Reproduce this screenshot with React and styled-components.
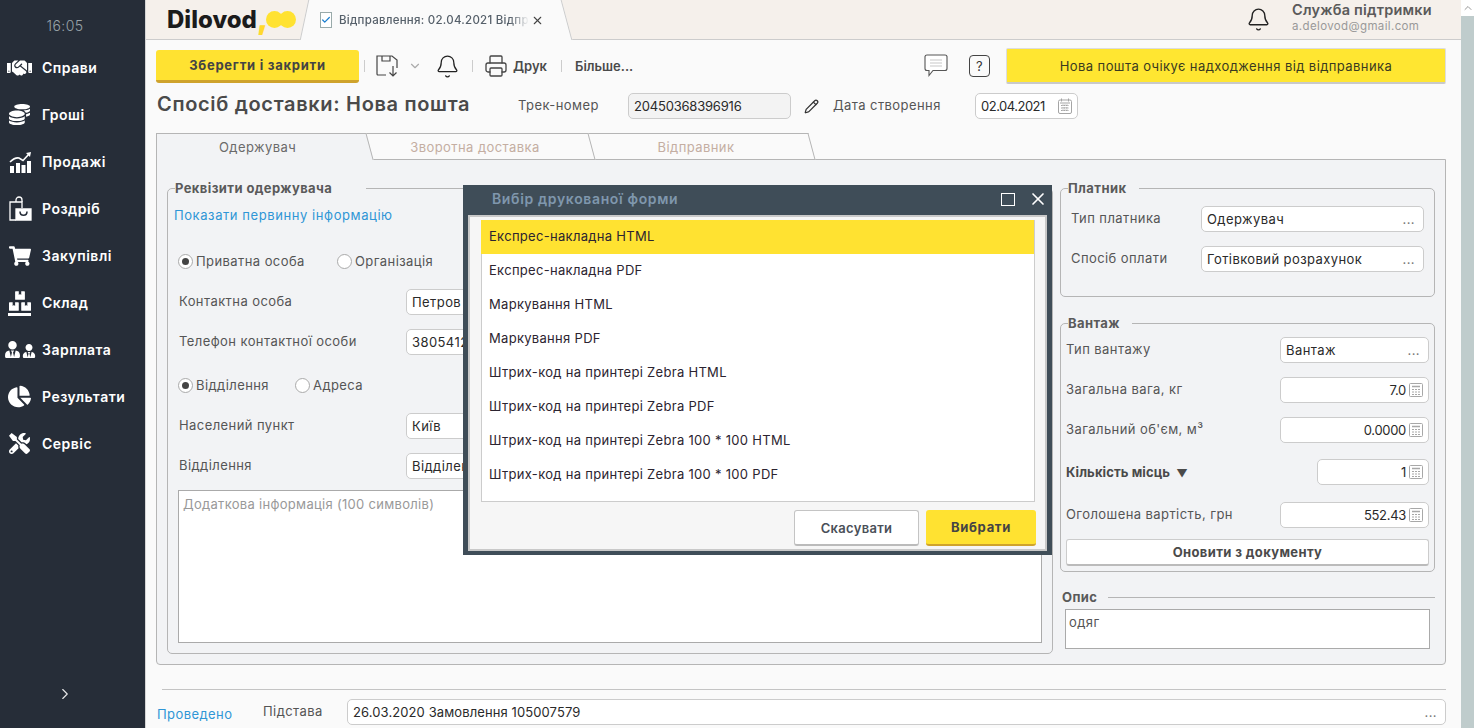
import React from 'react'
import styled, { createGlobalStyle } from 'styled-components'
import { Bell, Printer, Pencil, ChevronDown, ChevronRight, ChevronUp, X, Check } from 'lucide-react'
import { FaHandshake, FaCoins, FaShoppingCart, FaBoxes, FaUserTie, FaChartPie, FaTools } from 'react-icons/fa'

const GlobalStyle = createGlobalStyle`
  html, body {
    margin: 0;
    padding: 0;
    height: 100%;
    overflow: hidden;
  }
  body {
    font-family: Inter, "Noto Sans", "Liberation Sans", sans-serif;
    font-size: 13px;
    letter-spacing: 0.42px;
    color: #555;
  }
  * {
    box-sizing: border-box;
  }
`

const ChartIcon = () => (
  <svg width="24" height="24" viewBox="0 0 24 24" fill="#fff">
    <rect x="2" y="16" width="4" height="7" />
    <rect x="8" y="13" width="4" height="10" />
    <rect x="13.500" y="15" width="4" height="8" />
    <rect x="19" y="11" width="4" height="12" />
    <path d="M2 12c3-3 6-4.500 9-4l4 2.500 6-6.500" fill="none" stroke="#fff" strokeWidth="1.600" />
    <path d="M18 3l5-1-1 5z" />
  </svg>
)

const BagIcon = () => (
  <svg width="24" height="26" viewBox="0 0 24 26" fill="none" stroke="#fff" strokeWidth="1.300">
    <path d="M8 6V4a3 3 0 0 1 6 0v2" />
    <path d="M14 12V6H2v18h6" />
    <path d="M8 13h15v11H8z" fill="#fff" />
    <path d="M12 15.500c0 5 7 5 7 0" stroke="#262d38" strokeWidth="1.500" />
  </svg>
)

const StockIcon = () => (
  <StockWrap>
    <FaBoxes size={22} />
    <StockBar />
  </StockWrap>
)

const PeopleIcon = () => (
  <PeopleWrap>
    <FaUserTie size={17} />
    <FaUserTie size={14} />
  </PeopleWrap>
)

const SaveIcon = () => (
  <svg width="23" height="24" viewBox="0 0 23 24" fill="none" stroke="#444" strokeWidth="1.200">
    <path d="M10 21H2a1 1 0 0 1-1-1V2h15l5 4v8" />
    <path d="M6 2v5h8V2" />
    <path d="M17 12v10M13.500 18.500l3.500 3.500 3.500-3.500" />
  </svg>
)

const ChatIcon = () => (
  <svg width="24" height="26" viewBox="0 0 24 26" fill="#fff" stroke="#555" strokeWidth="1.100">
    <path d="M3 2h18a2 2 0 0 1 2 1.500v12a2 2 0 0 1-2 2H9l-4 5v-5H3a2 2 0 0 1-2-2v-12A2 2 0 0 1 3 2z" />
    <path d="M6 7h12M6 10h12M6 13h12" stroke="#c8c8c8" />
  </svg>
)

const CalendarIcon = () => (
  <svg width="14" height="16" viewBox="0 0 14 16" fill="none" stroke="#a5a5a5">
    <rect x="0.500" y="2" width="13" height="13.500" rx="1.500" />
    <path d="M3.500 0.500v3M10.500 0.500v3M2 5h10" />
    <path d="M3 7.500h8M3 10h8M3 12.500h8M5 6.500v7M7 6.500v7M9 6.500v7" strokeDasharray="1.500 1" />
  </svg>
)

const CalcIcon = () => (
  <svg width="14" height="14" viewBox="0 0 14 14" fill="none" stroke="#a8a8a8">
    <rect x="0.500" y="0.500" width="13" height="13" rx="1" />
    <path d="M3 3.500h8" strokeWidth="1.500" />
    <path d="M3 6.500h8M3 9h8M3 11.500h8" strokeDasharray="2 1" />
  </svg>
)

const NAV = [
  ['Справи', <FaHandshake size={26} />],
  ['Гроші', <FaCoins size={21} />],
  ['Продажі', <ChartIcon />],
  ['Роздріб', <BagIcon />],
  ['Закупівлі', <FaShoppingCart size={22} />],
  ['Склад', <StockIcon />],
  ['Зарплата', <PeopleIcon />],
  ['Результати', <FaChartPie size={23} />],
  ['Сервіс', <FaTools size={21} />],
]

const PRINT_FORMS = [
  'Експрес-накладна HTML',
  'Експрес-накладна PDF',
  'Маркування HTML',
  'Маркування PDF',
  'Штрих-код на принтері Zebra HTML',
  'Штрих-код на принтері Zebra PDF',
  'Штрих-код на принтері Zebra 100 * 100 HTML',
  'Штрих-код на принтері Zebra 100 * 100 PDF',
]

function SelectField({ value, width }) {
  return (
    <Field $width={width}>
      <FieldText>{value}</FieldText>
      <Dots>...</Dots>
    </Field>
  )
}

function NumberField({ value, width = 149 }) {
  return (
    <Field $width={width}>
      <FieldText $right $ls={-0.3}>{value}</FieldText>
      <CalcIcon />
    </Field>
  )
}

export default function App() {
  return (
    <Page>
      <GlobalStyle />
      <Sidebar>
        <Clock>16:05</Clock>
        <Nav>
          {NAV.map(([name, icon]) => (
            <NavItem key={name}>
              <NavIcon>{icon}</NavIcon>
              {name}
            </NavItem>
          ))}
        </Nav>
        <Collapse>
          <ChevronRight size={18} strokeWidth={1.500} />
        </Collapse>
      </Sidebar>

      <Main>
        <Header>
          <Logo>
            Dilovod<Comma>,</Comma>
            <Dot />
            <Dot />
          </Logo>
          <DocTab>
            <DocIcon>
              <Check size={10} strokeWidth={3} />
            </DocIcon>
            <DocTitle>Відправлення: 02.04.2021 Відправлення</DocTitle>
            <X size={13} color="#444" style={{ marginLeft: 2 }} />
          </DocTab>
          <Support>
            <Bell size={25} strokeWidth={1.300} color="#222" />
            <SupportText>
              <SupportName>Служба підтримки</SupportName>
              <SupportMail>a.delovod@gmail.com</SupportMail>
            </SupportText>
          </Support>
        </Header>

        <Content>
          <Toolbar>
            <SaveButton>Зберегти і закрити</SaveButton>
            <Sep $left={5} $right={11} />
            <SaveIcon />
            <ChevronDown size={14} color="#aaa" style={{ marginLeft: 9 }} />
            <Bell size={25} strokeWidth={1.200} color="#222" style={{ marginLeft: 13 }} />
            <Sep $left={12} $right={12} />
            <Printer size={24} strokeWidth={1.300} color="#444" style={{ marginLeft: -1 }} />
            <ToolText $left={5}>Друк</ToolText>
            <Sep $left={14} $right={13} />
            <ToolText>Більше...</ToolText>
            <ToolRight>
              <ChatIcon />
              <HelpBox>?</HelpBox>
              <StatusBox>Нова пошта очікує надходження від відправника</StatusBox>
            </ToolRight>
          </Toolbar>

          <TitleRow>
            <Title>Спосіб доставки: Нова пошта</Title>
            <TrackLabel>Трек-номер</TrackLabel>
            <Field $width={163} $muted>
              <FieldText $ls={-0.2}>20450368396916</FieldText>
            </Field>
            <Pencil size={15} color="#333" style={{ margin: '0 14px 0 13px' }} />
            <DateLabel>Дата створення</DateLabel>
            <Field $width={103}>
              <FieldText $ls={-0.5}>02.04.2021</FieldText>
              <CalendarIcon />
            </Field>
          </TitleRow>

          <Tabs>
            <Tab $active $width={213} $z={3}>Одержувач</Tab>
            <Tab $width={222} $z={2}>Зворотна доставка</Tab>
            <Tab $width={220} $z={1}>Відправник</Tab>
          </Tabs>

          <Panel>
            <RecipientBox>
              <Legend $gap={34}>Реквізити одержувача</Legend>
              <LinkText>Показати первинну інформацію</LinkText>
              <RadioRow $top={20}>
                <RadioLabel $width={159}>
                  <Radio $on />
                  Приватна особа
                </RadioLabel>
                <RadioLabel>
                  <Radio />
                  Організація
                </RadioLabel>
              </RadioRow>
              <FormRow $top={15}>
                <LeftLabel>Контактна особа</LeftLabel>
                <Field $width={400}><FieldText>Петров Петро</FieldText></Field>
              </FormRow>
              <FormRow $top={14}>
                <LeftLabel>Телефон контактної особи</LeftLabel>
                <Field $width={400}><FieldText>380541234567</FieldText></Field>
              </FormRow>
              <RadioRow $top={17}>
                <RadioLabel $width={117}>
                  <Radio $on />
                  Відділення
                </RadioLabel>
                <RadioLabel>
                  <Radio />
                  Адреса
                </RadioLabel>
              </RadioRow>
              <FormRow $top={15}>
                <LeftLabel>Населений пункт</LeftLabel>
                <Field $width={400}><FieldText>Київ</FieldText></Field>
              </FormRow>
              <FormRow $top={14}>
                <LeftLabel>Відділення</LeftLabel>
                <Field $width={400}><FieldText>Відділення №1</FieldText></Field>
              </FormRow>
              <NoteArea>Додаткова інформація (100 символів)</NoteArea>
            </RecipientBox>

            <SideColumn>
              <PayerBox>
                <Legend $gap={13}>Платник</Legend>
                <PayerRow $top={9}>
                  <span>Тип платника</span>
                  <SelectField value="Одержувач" width={223} />
                </PayerRow>
                <PayerRow $top={14}>
                  <span>Спосіб оплати</span>
                  <SelectField value="Готівковий розрахунок" width={223} />
                </PayerRow>
              </PayerBox>

              <CargoBox>
                <Legend $gap={12}>Вантаж</Legend>
                <CargoRow $top={5}>
                  <span>Тип вантажу</span>
                  <SelectField value="Вантаж" width={149} />
                </CargoRow>
                <CargoRow $top={14}>
                  <span>Загальна вага, кг</span>
                  <NumberField value="7.0" />
                </CargoRow>
                <CargoRow $top={14}>
                  <span>Загальний об'єм, м³</span>
                  <NumberField value="0.0000" />
                </CargoRow>
                <CargoRow $top={16}>
                  <strong>Кількість місць<Arrow>▼</Arrow></strong>
                  <NumberField value="1" width={112} />
                </CargoRow>
                <CargoRow $top={17}>
                  <span>Оголошена вартість, грн</span>
                  <NumberField value="552.43" />
                </CargoRow>
                <RefreshButton>Оновити з документу</RefreshButton>
              </CargoBox>

              <DescHead>Опис</DescHead>
              <DescArea>одяг</DescArea>
            </SideColumn>
          </Panel>

          <Footer>
            <FooterStatus>Проведено</FooterStatus>
            <FooterLabel>Підстава</FooterLabel>
            <Field $grow>
              <FieldText $ls={0.1}>26.03.2020 Замовлення 105007579</FieldText>
              <Dots>...</Dots>
            </Field>
          </Footer>
        </Content>
      </Main>

      <ScrollRail>
        <ScrollUp>
          <ChevronUp size={12} color="#999" />
        </ScrollUp>
      </ScrollRail>

      <Modal>
        <ModalHead>
          <ModalTitle>Вибір друкованої форми</ModalTitle>
          <MaxBox />
          <X size={20} color="#fff" strokeWidth={2} style={{ marginRight: -1 }} />
        </ModalHead>
        <ModalBody>
          <FormList>
            {PRINT_FORMS.map((name, i) => (
              <FormItem key={name} $selected={i === 0}>{name}</FormItem>
            ))}
          </FormList>
          <ModalActions>
            <CancelButton>Скасувати</CancelButton>
            <ChooseButton>Вибрати</ChooseButton>
          </ModalActions>
        </ModalBody>
      </Modal>
    </Page>
  )
}

const Page = styled.div`
  display: flex;
  width: 1474px;
  height: 728px;
  position: relative;
  overflow: hidden;
  background: #fafafa;
`

const Sidebar = styled.aside`
  width: 146px;
  flex: none;
  display: flex;
  flex-direction: column;
  background: #262d38;
  border-right: 1px solid #d5d5d5;
`

const Clock = styled.div`
  height: 44px;
  padding-top: 16px;
  text-align: center;
  padding-right: 15px;
  font-size: 14px;
  font-weight: 300;
  line-height: 20px;
  color: #98a2a8;
`

const Nav = styled.nav`
  display: flex;
  flex-direction: column;
`

const NavItem = styled.div`
  height: 47px;
  display: flex;
  align-items: center;
  color: #fff;
  font-size: 14px;
  font-weight: 600;
  letter-spacing: 0.5px;
`

const NavIcon = styled.span`
  width: 42px;
  padding-left: 7px;
  padding-right: 10px;
  display: flex;
  justify-content: center;
  align-items: center;
  flex: none;
`

const StockWrap = styled.span`
  display: flex;
  flex-direction: column;
  align-items: center;
`

const StockBar = styled.span`
  width: 23px;
  height: 3px;
  margin-top: 1px;
  background: #fff;
`

const PeopleWrap = styled.span`
  display: flex;
  align-items: flex-end;
  gap: 1px;
`

const Collapse = styled.div`
  margin-top: auto;
  margin-bottom: 25px;
  padding-right: 15px;
  display: flex;
  justify-content: center;
  color: #e8e8e8;
`

const Main = styled.main`
  flex: 1;
  min-width: 0;
  display: flex;
  flex-direction: column;
`

const Header = styled.header`
  height: 40px;
  display: flex;
  align-items: center;
  background: #f5f0eb;
  border-bottom: 1px solid #ccc;
`

const Logo = styled.div`
  width: 163px;
  padding-left: 21px;
  display: flex;
  align-items: center;
  font-size: 24px;
  font-weight: 800;
  letter-spacing: 0;
  color: #1b1b1b;
`

const Comma = styled.span`
  margin-right: -2px;
  margin-top: -3px;
  font-size: 30px;
  font-weight: 900;
  line-height: 30px;
  color: #ffd92e;
`

const Dot = styled.span`
  width: 17px;
  height: 17px;
  margin-right: -4px;
  border-radius: 50%;
  background: #ffe231;
`

const DocTab = styled.div`
  position: relative;
  align-self: stretch;
  width: 249px;
  margin-bottom: -1px;
  margin-left: 2px;
  padding-left: 9px;
  display: flex;
  align-items: center;
  background: #fafafa;
  z-index: 1;

  &::before,
  &::after {
    content: '';
    position: absolute;
    top: 0;
    bottom: 0;
    width: 14px;
    background: #fafafa;
    z-index: -1;
  }
  &::before {
    left: -7px;
    border-left: 1px solid #ccc;
    transform: skewX(-12deg);
  }
  &::after {
    right: -7px;
    border-right: 1px solid #ccc;
    transform: skewX(15deg);
  }
`

const DocIcon = styled.span`
  width: 12px;
  height: 16px;
  margin-right: 7px;
  display: flex;
  align-items: center;
  justify-content: center;
  flex: none;
  border: 1px solid #9aa;
  background: #fff;
  color: #1c7fd0;
`

const DocTitle = styled.span`
  width: 190px;
  overflow: hidden;
  white-space: nowrap;
  font-size: 11.500px;
  font-weight: 500;
  letter-spacing: 0.25px;
  color: #56606a;
  -webkit-mask-image: linear-gradient(to right, #000 90%, transparent);
  mask-image: linear-gradient(to right, #000 90%, transparent);
`

const Support = styled.div`
  margin-left: auto;
  margin-right: 28px;
  display: flex;
  align-items: center;
  gap: 21px;
`

const SupportText = styled.div`
  width: 141px;
  display: flex;
  flex-direction: column;
  gap: 1px;
  margin-top: -6px;
`

const SupportName = styled.div`
  font-size: 14.500px;
  font-weight: 600;
  letter-spacing: 0.2px;
  color: #5a5a5a;
  white-space: nowrap;
`

const SupportMail = styled.div`
  font-size: 11.500px;
  letter-spacing: 0.37px;
  color: #999;
`

const Content = styled.div`
  flex: 1;
  padding: 8px 15px 0 10px;
`

const Toolbar = styled.div`
  height: 36px;
  display: flex;
  align-items: center;
`

const SaveButton = styled.button`
  width: 203px;
  height: 33px;
  border: 0;
  border-bottom: 3px solid #cfa32c;
  border-radius: 3px;
  background: #ffe231;
  font: 700 13px Inter, "Noto Sans", sans-serif;
  letter-spacing: 0.72px;
  color: #444;
`

const Sep = styled.span`
  width: 1px;
  height: 12px;
  margin-left: ${p => p.$left}px;
  margin-right: ${p => p.$right}px;
  background: #ccc;
`

const ToolText = styled.span`
  margin-left: ${p => p.$left || 0}px;
  font-size: 13px;
  font-weight: 600;
  letter-spacing: 0;
  color: #4a4a4a;
`

const ToolRight = styled.div`
  margin-left: auto;
  display: flex;
  align-items: center;
`

const HelpBox = styled.span`
  width: 21px;
  height: 22px;
  margin: 0 16px 0 21px;
  display: flex;
  align-items: center;
  justify-content: center;
  border: 1.500px solid #444;
  border-radius: 4px;
  font-size: 13px;
  color: #333;
`

const StatusBox = styled.div`
  width: 440px;
  height: 36px;
  display: flex;
  align-items: center;
  justify-content: center;
  border: 1px solid #ddd;
  border-bottom: 2px solid #c9c9c9;
  border-radius: 2px;
  background: #ffe631;
  font-size: 13px;
  letter-spacing: 0.42px;
  color: #3a3a20;
`

const TitleRow = styled.div`
  height: 26px;
  margin-top: 9px;
  padding-left: 1px;
  display: flex;
  align-items: center;
`

const Title = styled.h1`
  width: 361px;
  margin: 0 0 4px;
  font-size: 20px;
  font-weight: 600;
  letter-spacing: 0.67px;
  color: #4a4a4a;
  white-space: nowrap;
`

const TrackLabel = styled.span`
  width: 110px;
  margin-bottom: 3px;
`

const DateLabel = styled.span`
  width: 142px;
  margin-bottom: 3px;
`

const Field = styled.div`
  width: ${p => (p.$width ? `${p.$width}px` : 'auto')};
  flex: ${p => (p.$grow ? 1 : 'none')};
  height: 26px;
  padding: 0 5px;
  display: flex;
  align-items: center;
  gap: 3px;
  overflow: hidden;
  background: ${p => (p.$muted ? '#f3f3f3' : '#fff')};
  border: 1px solid #ccc;
  border-radius: 5px;
  white-space: nowrap;
`

const FieldText = styled.span`
  flex: 1;
  font-size: 13px;
  letter-spacing: ${p => p.$ls ?? 0.42}px;
  color: #2a2a2a;
  text-align: ${p => (p.$right ? 'right' : 'left')};
`

const Dots = styled.span`
  padding: 0 3px 0 0;
  font-size: 13px;
  color: #777;
`

const Tabs = styled.div`
  height: 27px;
  margin-top: 14px;
  margin-bottom: -1px;
  padding-left: 1px;
  display: flex;
  position: relative;
  z-index: 1;
`

const Tab = styled.div`
  position: relative;
  width: ${p => p.$width}px;
  height: 27px;
  display: flex;
  align-items: center;
  justify-content: center;
  padding: 1px 12px 0 0;
  z-index: ${p => p.$z};
  color: ${p => (p.$active ? '#6a6a6a' : '#c4aea2')};

  &::before {
    content: '';
    position: absolute;
    inset: 0 0 0 ${p => (p.$active ? '30px' : '0')};
    z-index: -1;
    transform: skewX(15deg);
    background: ${p => (p.$active ? '#f2f3f5' : '#fafafa')};
    border-top: 1px solid #b5b5b5;
    border-right: 1px solid #b5b5b5;
    border-bottom: ${p => (p.$active ? '0' : '1px solid #b5b5b5')};
  }

  ${p =>
    p.$active &&
    `
    &::after {
      content: '';
      position: absolute;
      top: 0;
      bottom: 0;
      left: -1px;
      width: 40px;
      z-index: -1;
      background: #f2f3f5;
      border-top: 1px solid #b5b5b5;
      border-left: 1px solid #b5b5b5;
    }
  `}
`

const Panel = styled.section`
  height: 506px;
  padding: 19px 10px 10px;
  display: flex;
  gap: 7px;
  background: #f2f3f5;
  border: 1px solid #b5b5b5;
  border-radius: 0 0 4px 4px;
`

const Box = styled.fieldset`
  margin: 0;
  min-width: 0;
  border: 1px solid #b5b5b5;
  border-radius: 5px;
`

const Legend = styled.legend`
  padding: 0 ${p => p.$gap}px 0 0;
  height: 18px;
  line-height: 18px;
  font-size: 13px;
  font-weight: 700;
  letter-spacing: 0.4px;
  color: #5a5a5a;
`

const RecipientBox = styled(Box)`
  width: 886px;
  flex: none;
  padding: 5px 10px 10px 10px;
  display: flex;
  flex-direction: column;

  ${Legend} {
    margin-left: -3px;
  }
`

const LinkText = styled.a`
  height: 26px;
  margin-left: -4px;
  display: flex;
  align-items: center;
  letter-spacing: 0.58px;
  color: #2f96d6;
`

const RadioRow = styled.div`
  height: 26px;
  margin-top: ${p => p.$top}px;
  display: flex;
  align-items: center;
`

const RadioLabel = styled.label`
  width: ${p => (p.$width ? `${p.$width}px` : 'auto')};
  display: flex;
  align-items: center;
  gap: 3px;
  color: #555;
`

const Radio = styled.span`
  width: 15px;
  height: 15px;
  position: relative;
  flex: none;
  border: 1px solid #aaa;
  border-radius: 50%;
  background: #fff;

  ${p =>
    p.$on &&
    `
    &::after {
      content: '';
      position: absolute;
      left: 3px;
      top: 3px;
      width: 7px;
      height: 7px;
      border-radius: 50%;
      background: #444;
    }
  `}
`

const FormRow = styled.div`
  height: 26px;
  margin-top: ${p => p.$top}px;
  display: flex;
  align-items: center;
`

const LeftLabel = styled.span`
  width: 228px;
  margin-top: -2px;
  padding-left: 1px;
`

const NoteArea = styled.div`
  flex: 1;
  margin-top: 11px;
  padding: 5px 4px;
  background: #fff;
  border: 1px solid #aaa;
  letter-spacing: 0.3px;
  color: #999;
`

const SideColumn = styled.div`
  width: 375px;
  flex: none;
  display: flex;
  flex-direction: column;
`

const PayerBox = styled(Box)`
  height: 118px;
  padding: 0 10px;
  ${Legend} {
    margin-left: -3px;
  }
`

const PayerRow = styled.div`
  height: 26px;
  margin-top: ${p => p.$top}px;
  display: flex;
  align-items: center;
  justify-content: space-between;
  > span:first-child {
    margin-top: -2px;
  }
`

const CargoBox = styled(Box)`
  height: 258px;
  margin-top: 17px;
  padding: 0 5px;
  ${Legend} {
    margin-left: 2px;
  }
`

const CargoRow = styled.div`
  height: 26px;
  margin-top: ${p => p.$top || 0}px;
  display: flex;
  align-items: center;
  justify-content: space-between;
  > span:first-child {
    margin-top: -2px;
  }
  strong {
    font-weight: 700;
    letter-spacing: 0.1px;
    color: #4a4a4a;
  }
`

const Arrow = styled.span`
  margin-left: 6px;
  font-size: 11px;
`

const RefreshButton = styled.button`
  width: 100%;
  height: 27px;
  margin-top: 11px;
  background: #fff;
  border: 1px solid #ccc;
  border-bottom: 2px solid #bbb;
  border-radius: 3px;
  font: 700 13px Inter, "Noto Sans", sans-serif;
  letter-spacing: 0.37px;
  color: #4a4a4a;
`

const DescHead = styled.div`
  height: 18px;
  margin-top: 16px;
  padding-left: 2px;
  display: flex;
  align-items: center;
  gap: 11px;
  font-weight: 700;
  color: #5a5a5a;

  &::after {
    content: '';
    flex: 1;
    height: 1px;
    background: #b5b5b5;
  }
`

const DescArea = styled.div`
  width: 365px;
  height: 40px;
  margin-top: 3px;
  margin-left: 5px;
  padding: 4px 3px;
  background: #fff;
  border: 1px solid #aaa;
  color: #555;
`

const Footer = styled.footer`
  margin-top: 24px;
  margin-left: 6px;
  padding-top: 9px;
  display: flex;
  align-items: center;
  border-top: 1px solid #c4c4c4;
`

const FooterStatus = styled.span`
  width: 106px;
  margin-left: -5px;
  margin-top: 4px;
  color: #2f96d6;
`

const FooterLabel = styled.span`
  width: 84px;
  margin-bottom: 3px;
`

const ScrollRail = styled.div`
  width: 13px;
  flex: none;
  background: #bfcccc;
`

const ScrollUp = styled.div`
  height: 16px;
  display: flex;
  align-items: center;
  justify-content: center;
  background: #fff;
`

const Modal = styled.div`
  position: absolute;
  left: 463px;
  top: 185px;
  width: 589px;
  height: 370px;
  z-index: 5;
  padding: 0 5px 6px;
  display: flex;
  flex-direction: column;
  background: #3f4d58;
`

const ModalHead = styled.div`
  height: 30px;
  flex: none;
  display: flex;
  align-items: center;
  padding: 0 0 2px 24px;
`

const ModalTitle = styled.div`
  flex: 1;
  margin-bottom: 2px;
  font-size: 14px;
  font-weight: 600;
  letter-spacing: 0.64px;
  color: #7f97ad;
`

const MaxBox = styled.span`
  width: 14px;
  height: 13px;
  margin-right: 13px;
  border: 1px solid #fff;
`

const ModalBody = styled.div`
  flex: 1;
  padding: 3px 10px 3px 11px;
  background: #f6f6f6;
  border: 2px solid #c9c9c9;
  display: flex;
  flex-direction: column;
`

const FormList = styled.ul`
  height: 282px;
  margin: 0;
  padding: 0;
  list-style: none;
  background: #fff;
  border: 1px solid #ccc;
  border-top: 0;
`

const FormItem = styled.li`
  height: 34px;
  margin-left: -1px;
  padding-left: 8px;
  padding-bottom: 3px;
  display: flex;
  align-items: center;
  letter-spacing: 0.3px;
  color: #2c2430;
  background: ${p => (p.$selected ? '#ffe231' : 'transparent')};
`

const ModalActions = styled.div`
  margin-top: 8px;
  margin-right: -1px;
  display: flex;
  justify-content: flex-end;
  gap: 7px;
`

const CancelButton = styled.button`
  width: 125px;
  height: 36px;
  background: #fff;
  border: 1px solid #c4c4c4;
  border-bottom: 2px solid #bbb;
  border-radius: 3px;
  font: 600 13px Inter, "Noto Sans", sans-serif;
  letter-spacing: 0.3px;
  color: #4a4f58;
`

const ChooseButton = styled.button`
  width: 110px;
  height: 36px;
  background: #ffe231;
  border: 0;
  border-bottom: 2px solid #cfa32c;
  border-radius: 3px;
  font: 700 13px Inter, "Noto Sans", sans-serif;
  letter-spacing: 0.7px;
  color: #444;
`
